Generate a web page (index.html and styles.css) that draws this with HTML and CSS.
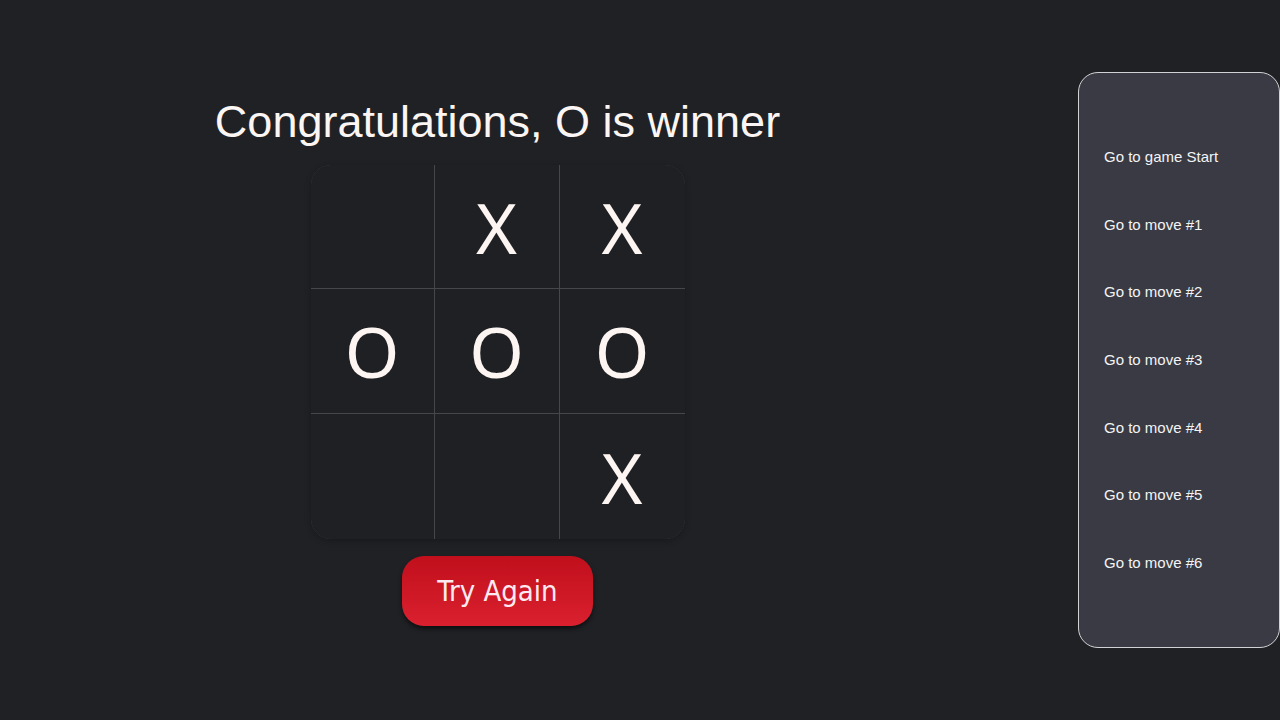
FILE: index.html
```html
<!DOCTYPE html>
<html lang="en">
<head>
<meta charset="utf-8">
<title>Tic Tac Toe</title>
<link rel="stylesheet" href="styles.css">
</head>
<body>
<div class="page">
  <main class="game">
    <h1 class="status">Congratulations, O is winner</h1>
    <div class="board">
      <button class="cell"></button>
      <button class="cell">X</button>
      <button class="cell">X</button>
      <button class="cell">O</button>
      <button class="cell">O</button>
      <button class="cell">O</button>
      <button class="cell"></button>
      <button class="cell"></button>
      <button class="cell">X</button>
    </div>
    <button class="retry">Try Again</button>
  </main>
  <aside class="history">
    <ol class="moves">
      <li><button class="move">Go to game Start</button></li>
      <li><button class="move">Go to move #1</button></li>
      <li><button class="move">Go to move #2</button></li>
      <li><button class="move">Go to move #3</button></li>
      <li><button class="move">Go to move #4</button></li>
      <li><button class="move">Go to move #5</button></li>
      <li><button class="move">Go to move #6</button></li>
    </ol>
  </aside>
</div>
</body>
</html>
```
FILE: styles.css
```css
html, body {
  margin: 0;
  padding: 0;
  background: #202125;
  height: 100%;
}

.page {
  display: flex;
  align-items: flex-start;
  width: 1280px;
  height: 720px;
}

.game {
  width: 995px;
  display: flex;
  flex-direction: column;
  align-items: center;
  padding-top: 96px;
}

.status {
  margin: 0 0 17px;
  font-family: "Liberation Sans", Arial, sans-serif;
  font-weight: normal;
  font-size: 45px;
  line-height: 52px;
  color: #fbf6f3;
}

.board {
  display: grid;
  grid-template-columns: 123px 124px 125px;
  grid-template-rows: 123px 124px 125px;
  gap: 1px;
  background: #46474c;
  border-radius: 20px;
  overflow: hidden;
  box-shadow: 0 2px 6px rgba(0, 0, 0, 0.25);
}

.cell {
  border: none;
  margin: 0;
  padding: 0;
  background: #1f2024;
  color: #fdf5f1;
  font-family: "Noto Sans", "Open Sans", sans-serif;
  font-size: 70px;
  line-height: 1;
  text-align: center;
}

.retry {
  margin-top: 17px;
  width: 191px;
  height: 70px;
  border: none;
  border-radius: 22px;
  background: linear-gradient(to bottom, #c10f1c, #da202f);
  box-shadow: 0 3px 4px rgba(0, 0, 0, 0.55);
  color: #fdeaf0;
  font-family: "DejaVu Sans Condensed", "DejaVu Sans", sans-serif;
  font-size: 29px;
  padding: 0;
}

.history {
  margin-left: auto;
  margin-top: 72px;
  width: 200px;
  height: 574px;
  background: #393a43;
  border: 1px solid #d2d2d6;
  border-radius: 20px;
}

.moves {
  list-style: none;
  margin: 0;
  padding: 50px 0;
  display: flex;
  flex-direction: column;
}

.moves li {
  height: 67.6px;
  display: flex;
  align-items: center;
}

.move {
  border: none;
  background: none;
  padding: 0 0 0 25px;
  margin: 0;
  color: #f4f4f6;
  font-family: "Liberation Sans", Arial, sans-serif;
  font-size: 15px;
  line-height: 17px;
  text-align: left;
}
```
